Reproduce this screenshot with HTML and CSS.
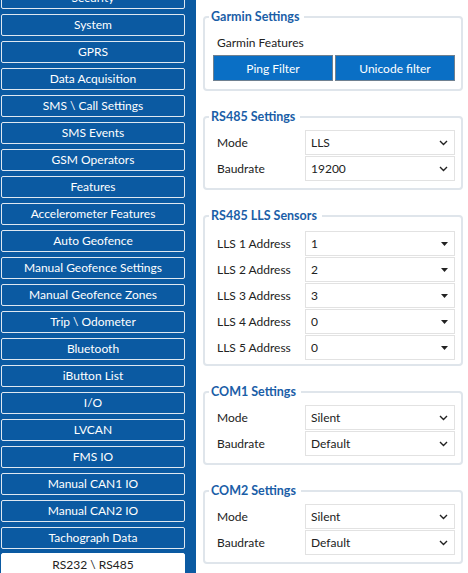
FILE: index.html
```html
<!DOCTYPE html>
<html>
<head>
<meta charset="utf-8">
<link rel="stylesheet" href="styles.css">
</head>
<body>
<nav class="nav">
  <ul class="nav-list">
    <li class="nav-item">Security</li>
    <li class="nav-item">System</li>
    <li class="nav-item">GPRS</li>
    <li class="nav-item">Data Acquisition</li>
    <li class="nav-item">SMS \ Call Settings</li>
    <li class="nav-item">SMS Events</li>
    <li class="nav-item">GSM Operators</li>
    <li class="nav-item">Features</li>
    <li class="nav-item">Accelerometer Features</li>
    <li class="nav-item">Auto Geofence</li>
    <li class="nav-item">Manual Geofence Settings</li>
    <li class="nav-item">Manual Geofence Zones</li>
    <li class="nav-item">Trip \ Odometer</li>
    <li class="nav-item">Bluetooth</li>
    <li class="nav-item">iButton List</li>
    <li class="nav-item">I/O</li>
    <li class="nav-item">LVCAN</li>
    <li class="nav-item">FMS IO</li>
    <li class="nav-item">Manual CAN1 IO</li>
    <li class="nav-item">Manual CAN2 IO</li>
    <li class="nav-item">Tachograph Data</li>
    <li class="nav-item active">RS232 \ RS485</li>
  </ul>
</nav>
<main class="main">
  <fieldset class="group garmin">
    <legend class="group-title">Garmin Settings</legend>
    <div class="sub-label">Garmin Features</div>
    <div class="btn-row">
      <button class="blue-btn">Ping Filter</button>
      <button class="blue-btn">Unicode filter</button>
    </div>
  </fieldset>

  <fieldset class="group">
    <legend class="group-title">RS485 Settings</legend>
    <div class="row"><span class="lbl">Mode</span><div class="select"><span>LLS</span><svg class="chev" viewBox="0 0 9 6"><path d="M1 1 L4.5 4.5 L8 1"/></svg></div></div>
    <div class="row"><span class="lbl">Baudrate</span><div class="select"><span>19200</span><svg class="chev" viewBox="0 0 9 6"><path d="M1 1 L4.5 4.5 L8 1"/></svg></div></div>
  </fieldset>

  <fieldset class="group lls">
    <legend class="group-title">RS485 LLS Sensors</legend>
    <div class="row"><span class="lbl">LLS 1 Address</span><div class="select"><span>1</span><svg class="tri" viewBox="0 0 7 4"><path d="M0 0 H7 L3.5 4 Z"/></svg></div></div>
    <div class="row"><span class="lbl">LLS 2 Address</span><div class="select"><span>2</span><svg class="tri" viewBox="0 0 7 4"><path d="M0 0 H7 L3.5 4 Z"/></svg></div></div>
    <div class="row"><span class="lbl">LLS 3 Address</span><div class="select"><span>3</span><svg class="tri" viewBox="0 0 7 4"><path d="M0 0 H7 L3.5 4 Z"/></svg></div></div>
    <div class="row"><span class="lbl">LLS 4 Address</span><div class="select"><span>0</span><svg class="tri" viewBox="0 0 7 4"><path d="M0 0 H7 L3.5 4 Z"/></svg></div></div>
    <div class="row"><span class="lbl">LLS 5 Address</span><div class="select"><span>0</span><svg class="tri" viewBox="0 0 7 4"><path d="M0 0 H7 L3.5 4 Z"/></svg></div></div>
  </fieldset>

  <fieldset class="group">
    <legend class="group-title">COM1 Settings</legend>
    <div class="row"><span class="lbl">Mode</span><div class="select"><span>Silent</span><svg class="chev" viewBox="0 0 9 6"><path d="M1 1 L4.5 4.5 L8 1"/></svg></div></div>
    <div class="row"><span class="lbl">Baudrate</span><div class="select"><span>Default</span><svg class="chev" viewBox="0 0 9 6"><path d="M1 1 L4.5 4.5 L8 1"/></svg></div></div>
  </fieldset>

  <fieldset class="group">
    <legend class="group-title">COM2 Settings</legend>
    <div class="row"><span class="lbl">Mode</span><div class="select"><span>Silent</span><svg class="chev" viewBox="0 0 9 6"><path d="M1 1 L4.5 4.5 L8 1"/></svg></div></div>
    <div class="row"><span class="lbl">Baudrate</span><div class="select"><span>Default</span><svg class="chev" viewBox="0 0 9 6"><path d="M1 1 L4.5 4.5 L8 1"/></svg></div></div>
  </fieldset>
</main>
</body>
</html>
```

FILE: styles.css
```css
* { box-sizing: border-box; }
html, body {
  margin: 0;
  padding: 0;
  width: 468px;
  height: 573px;
  overflow: hidden;
  background: #fff;
}
body {
  display: flex;
  font-family: Lato, "Open Sans", sans-serif;
  font-size: 12px;
  color: #222;
}
.nav {
  width: 196px;
  flex: none;
  height: 573px;
  background: #0b5aa2;
  overflow: hidden;
  padding-left: 1px;
}
.nav-list {
  list-style: none;
  margin: -13px 0 0 0;
  padding: 0;
  display: flex;
  flex-direction: column;
  gap: 5px;
}
.nav-item {
  width: 184px;
  height: 22px;
  border: 1px solid #dfe8f1;
  border-radius: 2px;
  color: #fff;
  display: flex;
  align-items: center;
  justify-content: center;
  line-height: 1;
}
.nav-item.active {
  background: #fff;
  color: #222;
  border-color: #fff;
  height: 24px;
  margin-top: -1px;
}
.main {
  flex: 1;
  padding: 9px 5px 0 7px;
  display: flex;
  flex-direction: column;
  gap: 18px;
}
.group {
  margin: 0;
  border: 2px solid #dfe5eb;
  border-radius: 4px;
  padding: 5px 6px 7px 8px;
  min-width: 0;
}
.group.lls { padding-top: 7px; padding-bottom: 4px; }
.group.garmin { padding-top: 9px; padding-bottom: 8px; }
.group-title {
  padding: 0 5px 0 2px;
  margin-left: -4px;
  font-weight: bold;
  color: #1a5ea7;
  line-height: 16px;
  font-size: 12.5px;
}
.sub-label {
  padding-left: 4px;
  line-height: 18px;
  margin-bottom: 3px;
}
.btn-row {
  display: grid;
  grid-template-columns: 1fr 1fr;
  gap: 2px;
}
.blue-btn {
  height: 26px;
  background: #0a6fc5;
  border: 1px solid #6f8090;
  color: #fff;
  font: inherit;
  padding: 0;
}
.row {
  display: grid;
  grid-template-columns: 92px 1fr;
  align-items: center;
  height: 25px;
}
.row + .row { margin-top: 1px; }
.lbl { padding-left: 4px; }
.select {
  height: 25px;
  border: 1px solid #e2e2e2;
  background: #fff;
  display: flex;
  align-items: center;
  justify-content: space-between;
  padding: 0 6px 0 5px;
}
.chev {
  width: 9px;
  height: 6px;
  fill: none;
  stroke: #222;
  stroke-width: 1.4;
}
.tri {
  width: 7px;
  height: 4px;
  fill: #222;
}
```
